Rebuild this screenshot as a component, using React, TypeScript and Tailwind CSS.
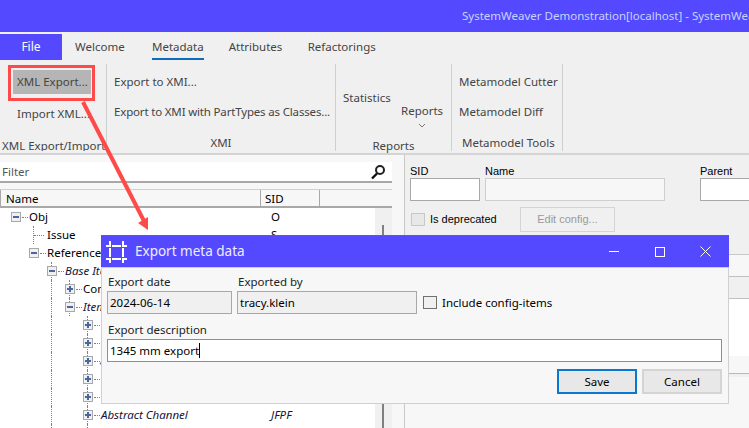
const sans = "font-['Noto_Sans',sans-serif]"

type Row = {
  level: number
  exp?: 'plus' | 'minus'
  through?: boolean
  guides?: number[]
  label?: string
  sid?: string
  italic?: boolean
  icon?: 'photo' | 'diamond' | 'red'
}

const rows: Row[] = [
  { level: 0, exp: 'minus', label: 'Obj', sid: 'O' },
  { level: 1, label: 'Issue', sid: 'S' },
  { level: 1, exp: 'minus', label: 'Referenceable', sid: 'R' },
  { level: 2, exp: 'minus', through: true, label: 'Base Items', italic: true },
  { level: 3, exp: 'plus', through: true, guides: [2], label: 'Config' },
  { level: 3, exp: 'minus', through: true, guides: [2], label: 'Items', italic: true },
  { level: 4, exp: 'plus', through: true, guides: [2], icon: 'photo' },
  { level: 4, exp: 'plus', through: true, guides: [2] },
  { level: 4, exp: 'plus', through: true, guides: [2], icon: 'diamond' },
  { level: 4, exp: 'plus', through: true, guides: [2], icon: 'red' },
  { level: 4, exp: 'plus', through: true, guides: [2] },
  { level: 4, exp: 'plus', through: true, guides: [2], label: 'Abstract Channel', sid: 'JFPF', italic: true },
  { level: 4, exp: 'plus', through: true, guides: [2] },
]

function Expander({ kind, through }: { kind: 'plus' | 'minus'; through?: boolean }) {
  return (
    <div className="relative flex h-[18px] w-[18px] shrink-0 items-center">
      {through && <div className="absolute left-[4px] top-0 h-full border-l border-dotted border-[#808080]" />}
      <div className="relative flex h-[10px] w-[10px] shrink-0 items-center justify-center border border-[#a8a8a8] bg-[#f0f0f0]">
        <div className="h-[2px] w-[6px] bg-[#4a66a0]" />
        {kind === 'plus' && <div className="absolute h-[6px] w-[2px] bg-[#4a66a0]" />}
      </div>
      <div className="ml-[1px] w-[6px] border-t border-dotted border-[#808080]" />
    </div>
  )
}

function TreeRow({ row }: { row: Row }) {
  const cols = Array.from({ length: row.level }, (_, i) => i)
  return (
    <div className="flex h-[18px] items-center text-[11.5px] text-black">
      <div className="flex h-full w-[261px] shrink-0 items-center overflow-hidden pl-[11px]">
        {cols.map((c) => (
          <div key={c} className="h-full w-[18px] shrink-0">
            {row.guides?.includes(c) && <div className="ml-[4px] h-full border-l border-dotted border-[#808080]" />}
          </div>
        ))}
        {row.exp ? (
          <Expander kind={row.exp} through={row.through} />
        ) : (
          <div className="flex h-full w-[18px] shrink-0 items-center">
            <div className="ml-[4px] h-full border-l border-dotted border-[#808080]" />
            <div className="w-[10px] border-t border-dotted border-[#808080]" />
          </div>
        )}
        {row.icon === 'photo' && <span className="h-[14px] w-[8px] shrink-0 bg-gradient-to-b from-[#b0b0b0] via-[#111111] to-[#777777]" />}
        {row.icon === 'diamond' && <span className="mt-[4px] h-[7px] w-[7px] shrink-0 rotate-45 bg-[#5a6a9a]" />}
        {row.icon === 'red' && <span className="mt-[2px] h-[9px] w-[10px] shrink-0 border border-[#e81010] bg-white" />}
        {row.label && <span className={row.italic ? 'whitespace-nowrap italic text-[#14143c]' : 'whitespace-nowrap'}>{row.label}</span>}
      </div>
      {row.sid && <span className={row.italic ? 'pl-[10px] italic text-[#14143c]' : 'pl-[10px]'}>{row.sid}</span>}
    </div>
  )
}

function Ribbon() {
  return (
    <div className="flex h-[123px] flex-col border-b-2 border-[#d4d4d4] bg-[#f0f0f0] text-[11.5px] text-[#444444]">
      <div className="flex h-[28px] items-end">
        <div className="flex h-[26px] w-[62px] items-center justify-center bg-[#5549ff] text-[12px] text-white">File</div>
        <div className="flex h-[26px] pl-[13px] leading-[26px]">
          <span className="w-[77px]">Welcome</span>
          <span className="h-[26px] border-b-2 border-[#0f6cbd]">Metadata</span>
          <span className="ml-[25px] w-[79px]">Attributes</span>
          <span>Refactorings</span>
        </div>
      </div>
      <div className="flex h-[93px] pb-[2px] pt-[4px]">
        <div className="flex w-[107px] shrink-0 flex-col overflow-hidden border-r border-[#cfcfcf]">
          <div className="ml-[13px] mt-[6px] flex h-[24px] w-[78px] shrink-0 items-center bg-[#b5b5b5] pl-[4px]">XML Export...</div>
          <div className="mt-[8px] flex h-[24px] shrink-0 items-center pl-[17px]">Import XML...</div>
          <div className="mt-[11px] whitespace-nowrap pl-[2px]">XML Export/Import</div>
        </div>
        <div className="flex w-[229px] shrink-0 flex-col border-r border-[#cfcfcf] pl-[7px]">
          <div className="mt-[6px] flex h-[24px] items-center">Export to XMI...</div>
          <div className="mt-[8px] flex h-[24px] items-center whitespace-nowrap tracking-[-0.17px]">Export to XMI with PartTypes as Classes...</div>
          <div className="mt-[11px] pr-[7px] text-center">XMI</div>
        </div>
        <div className="flex w-[116px] shrink-0 flex-col border-r border-[#cfcfcf]">
          <div className="flex h-[69px] shrink-0">
            <span className="w-[65px] pl-[7px] pt-[25px]">Statistics</span>
            <div className="flex flex-col items-center pt-[38px]">
              <span>Reports</span>
              <svg width="8" height="5" viewBox="0 0 8 5" className="mt-[4px]">
                <path d="M1 1l3 3 3-3" fill="none" stroke="#777" strokeWidth="1" />
              </svg>
            </div>
          </div>
          <div className="mt-[4px] text-center">Reports</div>
        </div>
        <div className="flex w-[111px] shrink-0 flex-col border-r border-[#cfcfcf] pl-[7px]">
          <div className="mt-[6px] flex h-[24px] items-center whitespace-nowrap">Metamodel Cutter</div>
          <div className="mt-[8px] flex h-[24px] items-center">Metamodel Diff</div>
          <div className="mt-[11px] whitespace-nowrap pl-[3px]">Metamodel Tools</div>
        </div>
      </div>
    </div>
  )
}

function LeftPane() {
  return (
    <div className="flex h-[273px] w-[405px] shrink-0 flex-col border-r border-[#c8c8c8] bg-[#f7f7f7] pr-[12px] pt-[7px]">
      <div className="flex h-[21px] shrink-0 items-center justify-between border-b-2 border-[#a8a8a8] bg-white pl-[2px] pr-[6px] text-[11.5px] text-[#555555]">
        <span>Filter</span>
        <svg width="16" height="16" viewBox="0 0 16 16">
          <circle cx="10" cy="6" r="4" fill="none" stroke="#222" strokeWidth="2" />
          <path d="M7 9.5L2 14.5" stroke="#111" strokeWidth="2.4" />
        </svg>
      </div>
      <div className="mt-[6px] flex min-h-0 flex-1 flex-col border-t border-[#d0d0d0] bg-white">
        <div className="flex h-[18px] shrink-0 border-b-2 border-[#a8a8a8] bg-[#f7f7f7] text-[11.5px] leading-[17px] text-black">
          <div className="w-[261px] border-l border-r border-[#a8a8a8] pl-[5px]">Name</div>
          <div className="w-[59px] border-r border-[#a8a8a8] pl-[4px]">SID</div>
        </div>
        <div className="flex min-h-0 flex-1">
          <div className="min-w-0 flex-1 overflow-hidden">
            {rows.map((r, i) => (
              <TreeRow key={i} row={r} />
            ))}
          </div>
          <div className="w-[17px] shrink-0 bg-[#f0f0f0] pl-[7px] pt-[17px]">
            <div className="h-full w-[2px] bg-[#808080]" />
          </div>
        </div>
      </div>
    </div>
  )
}

function RightPane() {
  return (
    <div className="flex min-w-0 flex-1 flex-col overflow-hidden bg-[#f0f0f0] font-['Liberation_Sans',sans-serif] text-[11px] text-black">
      <div className="flex h-[99px] shrink-0 flex-col pl-[5px] pt-[9px]">
        <div className="flex">
          <div className="w-[75px] shrink-0">
            <div className="h-[14px] leading-[14px]">SID</div>
            <div className="h-[23px] w-[70px] border border-[#a8a8a8] bg-white" />
          </div>
          <div className="w-[215px] shrink-0">
            <div className="h-[14px] leading-[14px]">Name</div>
            <div className="h-[23px] w-[180px] border border-[#cfcfcf] bg-[#f7f7f7]" />
          </div>
          <div className="w-[60px] shrink-0">
            <div className="h-[14px] leading-[14px]">Parent</div>
            <div className="h-[23px] w-[60px] border border-[#a8a8a8] border-r-0 bg-white" />
          </div>
        </div>
        <div className="mt-[6px] flex items-center">
          <div className="ml-[1px] h-[13px] w-[14px] border border-[#c8c8c8] bg-[#e8e8e8]" />
          <span className="ml-[5px] w-[90px]">Is deprecated</span>
          <div className="flex h-[25px] w-[95px] items-center justify-center border border-[#d4d4d4] text-[#9a9a9a]">Edit config...</div>
        </div>
      </div>
      <div className="h-[22px] shrink-0 border-t border-[#c8c8c8] bg-[#f7f7f7]" />
      <div className="h-[23px] shrink-0 border-t border-b border-[#c0c0c0] bg-[#f0f0f0]" />
      <div className="h-[57px] shrink-0 bg-white" />
      <div className="h-[18px] shrink-0 border-b border-[#b8b8b8] bg-[#f7f7f7]" />
      <div className="h-[3px] shrink-0 bg-[#f0f0f0]" />
      <div className="flex-1 bg-[#f7f7f7]" />
    </div>
  )
}

function ExportDialog() {
  return (
    <div className={`absolute left-[101px] top-[235px] flex h-[169px] w-[628px] flex-col ${sans}`}>
      <div className="flex h-[32px] shrink-0 items-center border-t border-[#1a7ad0] bg-[#5549ff] pl-[3px] text-white">
        <svg width="25" height="24" viewBox="0 0 25 24" shapeRendering="crispEdges">
          <path
            d="M2 5h5v2H2zM5 1h2v4H5zM18 5h5v2h-5zM18 1h2v4h-2zM2 18h5v2H2zM5 20h2v3H5zM18 18h5v2h-5zM18 20h2v3h-2zM8 5h9v2H8zM8 18h9v2H8zM5 8h2v9H5zM18 8h2v9h-2z"
            fill="#fff"
          />
        </svg>
        <span className="ml-[6px] text-[13.5px] text-[#eeeeff]">Export meta data</span>
        <div className="ml-auto flex h-full items-center">
          <div className="h-px w-[10px] bg-white" />
          <div className="ml-[36px] h-[10px] w-[10px] border border-white" />
          <svg width="11" height="11" viewBox="0 0 11 11" className="ml-[35px] mr-[18px]">
            <path d="M.5.5l10 10M10.5.5l-10 10" stroke="#fff" strokeWidth="1" />
          </svg>
        </div>
      </div>
      <div className="flex min-h-0 flex-1 flex-col border border-[#d0d0d0] bg-[#f7f7f7] pl-[5px] pr-[6px] text-[11.5px] text-[#222222]">
        <div className="mt-[5px] flex">
          <div className="w-[130px] shrink-0">
            <div className="h-[17px] pl-[1px] leading-[17px]">Export date</div>
            <div className="mt-[1px] flex h-[23px] w-[125px] items-center border border-[#a8a8a8] bg-[#f0f0f0] pl-[2px] text-black">2024-06-14</div>
          </div>
          <div className="w-[186px] shrink-0">
            <div className="h-[17px] pl-[1px] leading-[17px]">Exported by</div>
            <div className="mt-[1px] flex h-[23px] w-[180px] items-center border border-[#a8a8a8] bg-[#f0f0f0] pl-[2px] text-black">tracy.klein</div>
          </div>
          <div className="flex items-center pt-[18px]">
            <div className="h-[13px] w-[14px] border border-[#707070] bg-[#f0f0f0]" />
            <span className="ml-[5px] text-black">Include config-items</span>
          </div>
        </div>
        <div className="mt-[7px] h-[17px] pl-[1px] leading-[17px]">Export description</div>
        <div className="mt-[1px] flex h-[23px] items-center border border-[#5b9bd5] bg-white pl-[2px] text-black">
          1345 mm export
          <span className="h-[15px] w-px bg-black" />
        </div>
        <div className="mt-[7px] flex justify-end gap-[5px] text-black">
          <button className="h-[25px] w-[80px] border-2 border-[#0a78d0] bg-[#e8e8e8]">Save</button>
          <button className="h-[25px] w-[80px] border-2 border-[#d4d4d4] bg-[#e8e8e8]">Cancel</button>
        </div>
      </div>
    </div>
  )
}

export default function App() {
  return (
    <div className={`relative flex h-[428px] w-[749px] flex-col overflow-hidden bg-[#f7f7f7] ${sans}`}>
      <div className="flex h-[32px] shrink-0 items-center overflow-hidden whitespace-nowrap bg-[#5549ff] pl-[462px] text-[11.5px] text-[#c4d4ff]">
        SystemWeaver Demonstration[localhost] - SystemWeaver Client
      </div>
      <Ribbon />
      <div className="flex min-h-0 flex-1">
        <LeftPane />
        <RightPane />
      </div>
      <div className="absolute left-[8px] top-[65px] h-[36px] w-[87px] border-[3px] border-[#ff4a4a]" />
      <svg className="absolute left-0 top-0" width="749" height="428" viewBox="0 0 749 428" fill="none">
        <path d="M83 102L144 221" stroke="#ff4a4a" strokeWidth="4" />
        <path d="M148 230L138 223L148 217Z" fill="#ff4a4a" />
      </svg>
      <ExportDialog />
    </div>
  )
}
